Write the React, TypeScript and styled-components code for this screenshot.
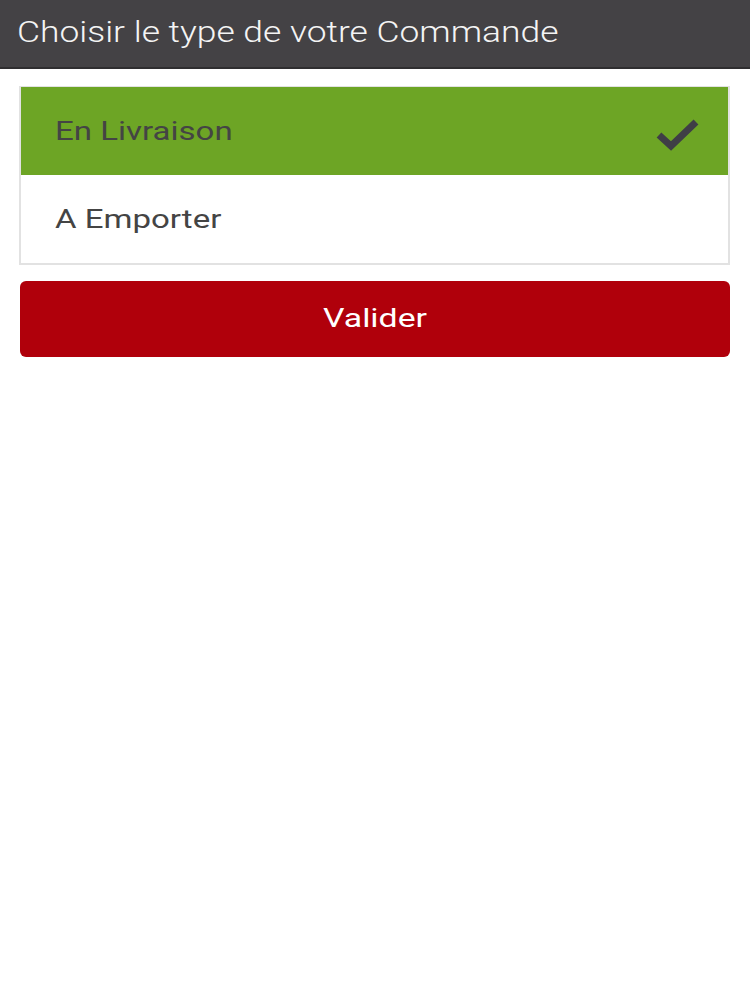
import React from "react";
import styled, { createGlobalStyle } from "styled-components";

const Global = createGlobalStyle`
  html, body { margin: 0; padding: 0; background: #ffffff; }
  body { font-family: Roboto, "Noto Sans", sans-serif; }
`;

const Page = styled.div`
  width: 750px;
  min-height: 1000px;
  background: #ffffff;
`;

const Header = styled.header`
  height: 69px;
  background: #444245;
  border-bottom: 2px solid #2f2e30;
  display: flex;
  align-items: center;
  padding: 0 17px;
  box-sizing: border-box;
`;

const Title = styled.h1`
  margin: 0;
  font-family: Roboto, sans-serif;
  font-weight: 300;
  font-size: 30px;
  color: #f4f4f4;
  display: inline-block;
  transform: scaleX(1.18);
  transform-origin: left center;
  white-space: nowrap;
  padding-bottom: 4px;
`;

const Content = styled.main`
  padding: 17px 20px 0 19px;
  display: flex;
  flex-direction: column;
  gap: 16px;
`;

const List = styled.div`
  border: 2px solid #e2e2e2;
  border-top-width: 1px;
  display: flex;
  flex-direction: column;
`;

const Option = styled.div<{ $selected?: boolean }>`
  height: 88px;
  display: flex;
  align-items: center;
  justify-content: space-between;
  padding: 0 28px 0 34px;
  background: ${(p) => (p.$selected ? "#6da525" : "#ffffff")};
  color: #444444;
  font-family: Roboto, sans-serif;
  font-size: 26px;
  box-sizing: border-box;
`;

const Label = styled.span`
  display: inline-block;
  transform: scaleX(1.27);
  transform-origin: left center;
  white-space: nowrap;
  padding-bottom: 1px;
`;

const CheckWrap = styled.span`
  display: flex;
  padding-top: 8px;
`;

const Button = styled.button`
  height: 76px;
  margin-left: 1px;
  border: none;
  border-radius: 6px;
  background: #b0000b;
  color: #ffffff;
  font-family: Roboto, sans-serif;
  font-size: 26px;
  display: flex;
  align-items: center;
  justify-content: center;
  padding: 0 0 2px 0;
`;

const ButtonText = styled.span`
  display: inline-block;
  transform: scaleX(1.3);
  transform-origin: center center;
`;

const Check = () => (
  <svg width="44" height="34" viewBox="0 0 44 34">
    <path
      d="M3 17 L15 28 L40 4"
      fill="none"
      stroke="#3f3e46"
      strokeWidth="7"
      strokeLinejoin="miter"
    />
  </svg>
);

export default function App() {
  return (
    <Page>
      <Global />
      <Header>
        <Title>Choisir le type de votre Commande</Title>
      </Header>
      <Content>
        <List>
          <Option $selected>
            <Label>En Livraison</Label>
            <CheckWrap>
              <Check />
            </CheckWrap>
          </Option>
          <Option>
            <Label>A Emporter</Label>
          </Option>
        </List>
        <Button>
          <ButtonText>Valider</ButtonText>
        </Button>
      </Content>
    </Page>
  );
}
